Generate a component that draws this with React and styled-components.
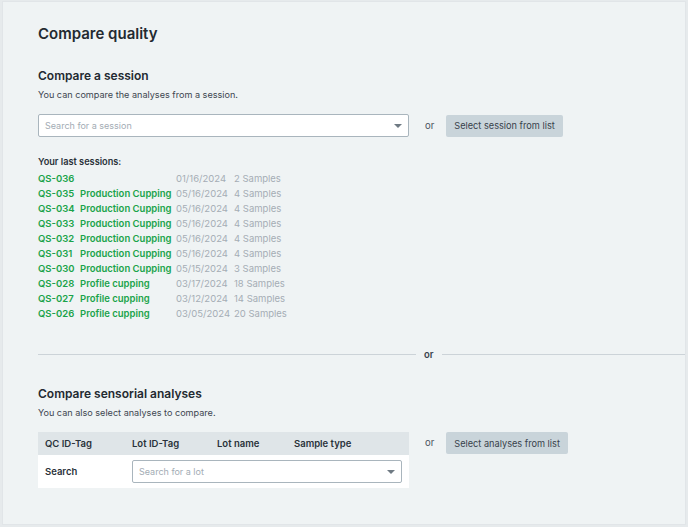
import React from "react";
import styled, { createGlobalStyle } from "styled-components";

const sessions = [
  { id: "QS-036", name: "", date: "01/16/2024", samples: "2 Samples" },
  { id: "QS-035", name: "Production Cupping", date: "05/16/2024", samples: "4 Samples" },
  { id: "QS-034", name: "Production Cupping", date: "05/16/2024", samples: "4 Samples" },
  { id: "QS-033", name: "Production Cupping", date: "05/16/2024", samples: "4 Samples" },
  { id: "QS-032", name: "Production Cupping", date: "05/16/2024", samples: "4 Samples" },
  { id: "QS-031", name: "Production Cupping", date: "05/16/2024", samples: "4 Samples" },
  { id: "QS-030", name: "Production Cupping", date: "05/15/2024", samples: "3 Samples" },
  { id: "QS-028", name: "Profile cupping", date: "03/17/2024", samples: "18 Samples" },
  { id: "QS-027", name: "Profile cupping", date: "03/12/2024", samples: "14 Samples" },
  { id: "QS-026", name: "Profile cupping", date: "03/05/2024", samples: "20 Samples" },
];

export default function App() {
  return (
    <>
      <GlobalStyle />
      <Panel>
        <Title>Compare quality</Title>

        <Section>
          <SectionTitle>Compare a session</SectionTitle>
          <Description>You can compare the analyses from a session.</Description>
          <ActionRow>
            <Select width="371px">
              <Placeholder>Search for a session</Placeholder>
              <Caret />
            </Select>
            <Or>or</Or>
            <Button>Select session from list</Button>
          </ActionRow>

          <ListTitle>Your last sessions:</ListTitle>
          <SessionList>
            {sessions.map((s) => (
              <SessionRow key={s.id}>
                <Green>{s.id}</Green>
                <Green>{s.name}</Green>
                <Muted>{s.date}</Muted>
                <Muted>{s.samples}</Muted>
              </SessionRow>
            ))}
          </SessionList>
        </Section>

        <Divider>
          <Line />
          <DividerText>or</DividerText>
          <Line />
        </Divider>

        <Section>
          <SectionTitle>Compare sensorial analyses</SectionTitle>
          <Description>You can also select analyses to compare.</Description>
          <ActionRow align="flex-start">
            <Table>
              <HeadRow>
                <HeadCell>QC ID-Tag</HeadCell>
                <HeadCell>Lot ID-Tag</HeadCell>
                <HeadCell>Lot name</HeadCell>
                <HeadCell>Sample type</HeadCell>
              </HeadRow>
              <BodyRow>
                <RowLabel>Search</RowLabel>
                <Select width="270px">
                  <Placeholder>Search for a lot</Placeholder>
                  <Caret />
                </Select>
              </BodyRow>
            </Table>
            <Or>or</Or>
            <Button>Select analyses from list</Button>
          </ActionRow>
        </Section>
      </Panel>
    </>
  );
}

const GlobalStyle = createGlobalStyle`
  html, body {
    margin: 0;
    padding: 0;
    background: #e6eaec;
  }
  body {
    padding: 1px 2px 2px 2px;
    font-family: Inter, "Noto Sans", sans-serif;
    color: #2a323a;
  }
`;

const Panel = styled.div`
  box-sizing: border-box;
  height: 524px;
  background: #eff3f4;
  border: 1px solid #e1e5e8;
  padding: 22px 0 0 35px;
`;

const Title = styled.h1`
  margin: 0 0 23px;
  font-size: 15px;
  line-height: 20px;
  font-weight: 600;
  color: #232a31;
`;

const Section = styled.div`
  padding-right: 12px;
`;

const SectionTitle = styled.h2`
  margin: 0;
  font-size: 12px;
  line-height: 18px;
  font-weight: 600;
  color: #232a31;
`;

const Description = styled.p`
  margin: 3px 0 0;
  font-size: 9.1px;
  line-height: 14px;
  color: #3d4650;
`;

const ActionRow = styled.div`
  display: flex;
  align-items: ${(p) => p.align || "center"};
  margin-top: 12px;
`;

const Select = styled.div`
  box-sizing: border-box;
  width: ${(p) => p.width};
  height: 23px;
  display: flex;
  align-items: center;
  justify-content: space-between;
  padding: 0 6px 0 6px;
  background: #fff;
  border: 1px solid #a9b5bd;
  border-radius: 2px;
`;

const Placeholder = styled.span`
  font-size: 9px;
  color: #a3acb4;
`;

const Caret = styled.span`
  width: 0;
  height: 0;
  border-left: 4px solid transparent;
  border-right: 4px solid transparent;
  border-top: 4px solid #6f7a83;
`;

const Or = styled.span`
  margin: 0 12px 0 16px;
  font-size: 9.5px;
  line-height: 22px;
  color: #4a545d;
`;

const Button = styled.button`
  height: 22px;
  padding: 0 8px;
  border: none;
  border-radius: 2px;
  background: #c9d4da;
  font-family: inherit;
  font-size: 9.2px;
  color: #38424b;
`;

const ListTitle = styled.div`
  margin-top: 19px;
  font-size: 9.2px;
  line-height: 12px;
  font-weight: 600;
  color: #2a323a;
`;

const SessionList = styled.div`
  margin-top: 3px;
`;

const SessionRow = styled.div`
  display: grid;
  grid-template-columns: 42px 96px 58px auto;
  font-size: 9.5px;
  line-height: 15px;
`;

const Green = styled.span`
  font-weight: 600;
  color: #1aa34a;
  white-space: nowrap;
`;

const Muted = styled.span`
  color: #a5adb5;
  white-space: nowrap;
`;

const Divider = styled.div`
  display: flex;
  align-items: center;
  margin: 28px 0 25px;
`;

const Line = styled.div`
  flex: 1;
  height: 1px;
  background: #ccd3d8;
  &:first-child {
    flex: 0 0 378px;
  }
`;

const DividerText = styled.span`
  margin: 0 8px;
  font-size: 9.5px;
  font-weight: 600;
  color: #3a434c;
`;

const Table = styled.div`
  width: 371px;
  background: #fff;
`;

const HeadRow = styled.div`
  display: grid;
  grid-template-columns: 87px 85px 77px auto;
  align-items: center;
  height: 23px;
  padding-left: 7px;
  background: #dfe5e8;
`;

const HeadCell = styled.span`
  font-size: 9.5px;
  font-weight: 600;
  color: #2a323a;
`;

const BodyRow = styled.div`
  display: grid;
  grid-template-columns: 87px auto;
  align-items: center;
  height: 33px;
  padding-left: 7px;
`;

const RowLabel = styled.span`
  font-size: 9.5px;
  font-weight: 600;
  color: #2a323a;
`;
